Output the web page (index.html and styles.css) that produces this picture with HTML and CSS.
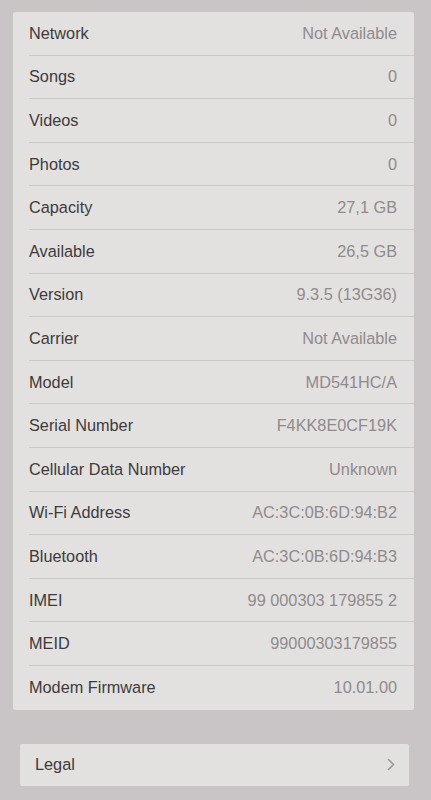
FILE: index.html
```html
<!DOCTYPE html>
<html>
<head>
<meta charset="utf-8">
<link rel="stylesheet" href="styles.css">
</head>
<body>
<div class="screen">
  <div class="card">
    <div class="row"><span class="label">Network</span><span class="value">Not Available</span></div>
    <div class="row"><span class="label">Songs</span><span class="value">0</span></div>
    <div class="row"><span class="label">Videos</span><span class="value">0</span></div>
    <div class="row"><span class="label">Photos</span><span class="value">0</span></div>
    <div class="row"><span class="label">Capacity</span><span class="value">27,1 GB</span></div>
    <div class="row"><span class="label">Available</span><span class="value">26,5 GB</span></div>
    <div class="row"><span class="label">Version</span><span class="value">9.3.5 (13G36)</span></div>
    <div class="row"><span class="label">Carrier</span><span class="value">Not Available</span></div>
    <div class="row"><span class="label">Model</span><span class="value">MD541HC/A</span></div>
    <div class="row"><span class="label">Serial Number</span><span class="value">F4KK8E0CF19K</span></div>
    <div class="row"><span class="label">Cellular Data Number</span><span class="value">Unknown</span></div>
    <div class="row"><span class="label">Wi-Fi Address</span><span class="value">AC:3C:0B:6D:94:B2</span></div>
    <div class="row"><span class="label">Bluetooth</span><span class="value">AC:3C:0B:6D:94:B3</span></div>
    <div class="row"><span class="label">IMEI</span><span class="value">99 000303 179855 2</span></div>
    <div class="row"><span class="label">MEID</span><span class="value">99000303179855</span></div>
    <div class="row last"><span class="label">Modem Firmware</span><span class="value">10.01.00</span></div>
  </div>
  <div class="card legal">
    <div class="row last"><span class="label">Legal</span>
      <svg class="chev" width="8" height="13" viewBox="0 0 8 13"><path d="M1.5 1.5 L6.5 6.5 L1.5 11.5" fill="none" stroke="#9a9696" stroke-width="1.6" stroke-linecap="round" stroke-linejoin="round"/></svg>
    </div>
  </div>
</div>
</body>
</html>
```

FILE: styles.css
```css
html, body {
  margin: 0;
  padding: 0;
}
body {
  background: #c9c5c6;
  font-family: "Liberation Sans", Arial, sans-serif;
  width: 431px;
  height: 800px;
  overflow: hidden;
}
.screen {
  padding-top: 12px;
  display: flex;
  flex-direction: column;
}
.card {
  background: #e3e0e0;
  margin: 0 17px 0 13px;
  padding-left: 16px;
  border-radius: 2px;
}
.row {
  height: 43.6px;
  box-sizing: border-box;
  display: flex;
  align-items: center;
  justify-content: space-between;
  padding-right: 17px;
  border-bottom: 1px solid #cdc9c9;
  font-size: 16.3px;
}
.row.last {
  border-bottom: none;
}
.label {
  color: #3d3b3c;
}
.value {
  color: #8f8b8c;
}
.legal {
  margin: 34px 22px 0 20px;
  padding-left: 15px;
}
.legal .row {
  height: 42px;
  padding-right: 14px;
}
.chev {
  display: block;
}
```
